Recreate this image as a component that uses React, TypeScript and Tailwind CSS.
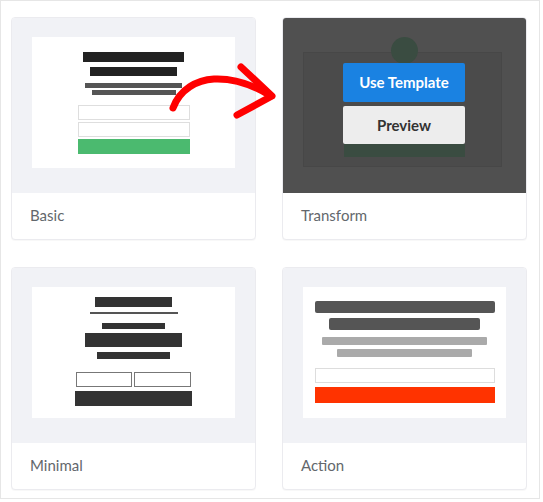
const font = { fontFamily: 'Lato, "Liberation Sans", sans-serif' };

const Card = ({ label, dark, children }: { label: string; dark?: boolean; children: React.ReactNode }) => (
  <div className="rounded-[4px] border border-[#ebebef] bg-white overflow-hidden shadow-[0_1px_1px_rgba(0,0,0,0.03)]">
    <div className={`relative h-[175px] pt-[19px] pl-[20px] ${dark ? 'bg-[#505050]' : 'bg-[#f1f2f6]'}`}>{children}</div>
    <div className="h-[46px] flex items-center px-[18px] pb-[1px] text-[15px] text-[#63676c]">{label}</div>
  </div>
);

const Basic = () => (
  <div className="w-[203px] h-[131px] bg-white flex flex-col items-center pt-[15px]">
    <div className="w-[101px] h-[10px] bg-[#222]" />
    <div className="w-[87px] h-[9px] bg-[#222] mt-[5px]" />
    <div className="w-[97px] h-[5px] bg-[#555] mt-[7px]" />
    <div className="w-[84px] h-[5px] bg-[#555] mt-[2px]" />
    <div className="w-[112px] h-[15px] border border-[#dedede] mt-[10px]" />
    <div className="w-[112px] h-[15px] border border-[#dedede] mt-[2px]" />
    <div className="w-[112px] h-[15px] bg-[#4bba6f] mt-[2px]" />
  </div>
);

const Minimal = () => (
  <div className="w-[203px] h-[131px] bg-white flex flex-col items-center pt-[10px]">
    <div className="w-[77px] h-[10px] bg-[#333]" />
    <div className="w-[88px] h-[2px] bg-[#555] mt-[5px]" />
    <div className="w-[63px] h-[6px] bg-[#333] mt-[9px]" />
    <div className="w-[97px] h-[14px] bg-[#333] mt-[4px]" />
    <div className="w-[73px] h-[7px] bg-[#333] mt-[5px]" />
    <div className="flex gap-[2px] mt-[13px]">
      <div className="w-[56px] h-[15px] border-[1.5px] border-[#777]" />
      <div className="w-[57px] h-[15px] border-[1.5px] border-[#777]" />
    </div>
    <div className="w-[117px] h-[15px] bg-[#333] mt-[4px]" />
  </div>
);

const Action = () => (
  <div className="w-[203px] h-[131px] bg-white flex flex-col items-center pt-[14px]">
    <div className="w-[180px] h-[12px] rounded-[2px] bg-[#555]" />
    <div className="w-[151px] h-[12px] rounded-[2px] bg-[#555] mt-[5px]" />
    <div className="w-[165px] h-[8px] rounded-[1px] bg-[#aaa] mt-[7px]" />
    <div className="w-[135px] h-[8px] rounded-[1px] bg-[#aaa] mt-[4px]" />
    <div className="w-[180px] h-[15px] border border-[#ddd] mt-[11px]" />
    <div className="w-[180px] h-[16px] bg-[#ff3300] mt-[4px]" />
  </div>
);

const Transform = () => (
  <>
    <div className="w-[199px] h-[115px] mt-[15px] bg-[#4b4b4b] border border-[#474747]" />
    <div className="absolute left-[108px] top-[19px] w-[27px] h-[27px] rounded-full bg-[#3a4c41]" />
    <div className="absolute left-[61px] top-[126px] w-[121px] h-[13px] bg-[#3a4c41]" />
    <div className="absolute left-[60px] top-[45px] w-[122px] flex flex-col gap-[4px]">
      <button className="h-[39px] rounded-[2px] bg-[#1a82e2] text-white font-bold text-[15px]">Use Template</button>
      <button className="h-[38px] rounded-[2px] bg-[#ededed] text-[#333] font-bold text-[15px]">Preview</button>
    </div>
  </>
);

export default function App() {
  return (
    <div className="relative w-[540px] h-[499px] border border-[#e6e6e6] bg-white pt-4 pl-[10px]" style={font}>
      <div className="grid grid-cols-[245px_245px] gap-x-[26px] gap-y-[27px]">
        <Card label="Basic"><Basic /></Card>
        <Card label="Transform" dark><Transform /></Card>
        <Card label="Minimal"><Minimal /></Card>
        <Card label="Action"><Action /></Card>
      </div>
      <svg className="absolute -left-px -top-px pointer-events-none" width="543" height="502" viewBox="0 0 543 502">
        <path d="M173 108 C180 89 197 80 214 79 C236 78 255 86 271 96" fill="none" stroke="#ff0000" strokeWidth="7" strokeLinecap="round" />
        <path d="M241 67 L272 96 L237 115" fill="none" stroke="#ff0000" strokeWidth="7" strokeLinecap="round" strokeLinejoin="round" />
      </svg>
    </div>
  );
}
